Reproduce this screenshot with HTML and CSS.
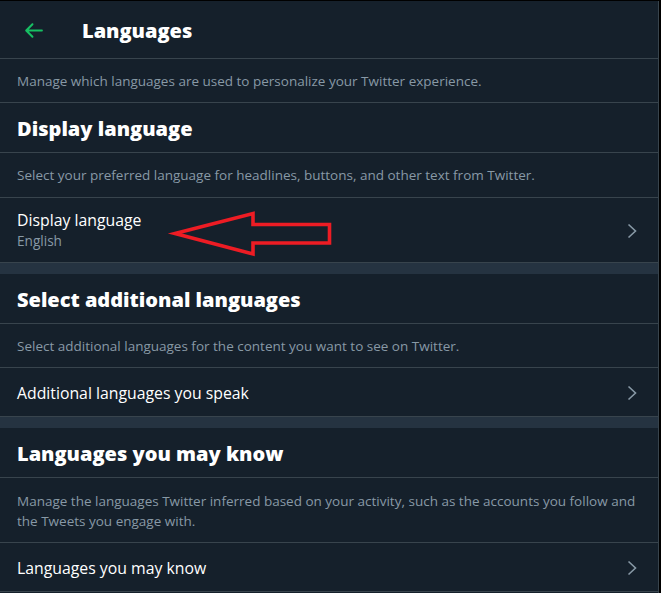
FILE: index.html
```html
<!DOCTYPE html>
<html lang="en">
<head>
<meta charset="utf-8">
<title>Languages</title>
<link rel="stylesheet" href="styles.css">
</head>
<body>
<main class="column">
  <header class="topbar">
    <span class="back">
      <svg viewBox="0 0 24 24" width="25" height="25"><path fill="#17bf63" d="M20 11H7.414l4.293-4.293c.39-.39.39-1.023 0-1.414s-1.023-.39-1.414 0l-6 6c-.39.39-.39 1.023 0 1.414l6 6c.195.195.45.293.707.293s.512-.098.707-.293c.39-.39.39-1.023 0-1.414L7.414 13H20c.553 0 1-.447 1-1s-.447-1-1-1z"/></svg>
    </span>
    <h1 class="title">Languages</h1>
  </header>

  <p class="desc desc-top">Manage which languages are used to personalize your Twitter experience.</p>

  <h2 class="heading">Display language</h2>
  <p class="desc">Select your preferred language for headlines, buttons, and other text from Twitter.</p>
  <a class="row row-tall">
    <span class="row-text">
      <span class="row-label">Display language</span>
      <span class="row-sub">English</span>
    </span>
    <svg class="chev" viewBox="0 0 10 16" width="10" height="16"><polyline points="1.5,1.5 8.5,8 1.5,14.5" fill="none" stroke="#8899a6" stroke-width="1.6"/></svg>
  </a>
  <div class="band"></div>

  <h2 class="heading">Select additional languages</h2>
  <p class="desc desc-top">Select additional languages for the content you want to see on Twitter.</p>
  <a class="row">
    <span class="row-label">Additional languages you speak</span>
    <svg class="chev" viewBox="0 0 10 16" width="10" height="16"><polyline points="1.5,1.5 8.5,8 1.5,14.5" fill="none" stroke="#8899a6" stroke-width="1.6"/></svg>
  </a>
  <div class="band"></div>

  <h2 class="heading">Languages you may know</h2>
  <p class="desc desc-two">Manage the languages Twitter inferred based on your activity, such as the accounts you follow and the Tweets you engage with.</p>
  <a class="row">
    <span class="row-label">Languages you may know</span>
    <svg class="chev" viewBox="0 0 10 16" width="10" height="16"><polyline points="1.5,1.5 8.5,8 1.5,14.5" fill="none" stroke="#8899a6" stroke-width="1.6"/></svg>
  </a>

  <svg class="annot" width="661" height="593" viewBox="0 0 661 593">
    <polygon points="175,233.5 253,213.5 253,224.5 329.5,224.5 329.5,243 253,243 253,254" fill="none" stroke="#ed1c24" stroke-width="3.6" stroke-linejoin="miter"/>
  </svg>
</main>
</body>
</html>
```

FILE: styles.css
```css
html, body {
  margin: 0;
  padding: 0;
  background: #000;
}
body {
  font-family: "Open Sans", "Noto Sans", sans-serif;
  color: #fff;
  overflow: hidden;
  height: 593px;
}
.column {
  margin-top: 1px;
  width: 658px;
  height: 592px;
  background: #15202b;
  border-right: 1px solid #38444d;
  display: flex;
  flex-direction: column;
  overflow: hidden;
}
.topbar {
  display: flex;
  align-items: center;
  height: 55px;
  padding-top: 2px;
  border-bottom: 1px solid #38444d;
  padding-left: 21px;
  flex-shrink: 0;
}
.back {
  display: flex;
  width: 61px;
}
.title {
  margin: 0;
  font-size: 20px;
  font-weight: 800;
}
.desc {
  margin: 0;
  padding: 0 17px;
  display: flex;
  align-items: center;
  height: 44px;
  flex-shrink: 0;
  border-bottom: 1px solid #38444d;
  font-size: 13.5px;
  color: #8899a6;
  line-height: 20px;
}
.desc-top {
  height: 43px;
}
.desc-two {
  height: 63px;
  padding-top: 1px;
}
.heading {
  margin: 0;
  padding: 2px 17px 0;
  height: 47px;
  flex-shrink: 0;
  display: flex;
  align-items: center;
  border-bottom: 1px solid #38444d;
  font-size: 20px;
  font-weight: 800;
}
.row {
  display: flex;
  align-items: center;
  justify-content: space-between;
  padding: 2px 21px 0 17px;
  height: 46px;
  flex-shrink: 0;
  border-bottom: 1px solid #38444d;
  color: #fff;
}
.row-tall {
  height: 62px;
}
.row-text {
  display: flex;
  flex-direction: column;
  padding-bottom: 2px;
}
.row-label {
  font-size: 15.8px;
  line-height: 22px;
}
.row-sub {
  font-size: 13.6px;
  line-height: 20px;
  color: #8899a6;
}
.chev {
  display: block;
}
.band {
  height: 11px;
  flex-shrink: 0;
  background: #253341;
}
.annot {
  position: absolute;
  left: 0;
  top: 0;
  pointer-events: none;
}
```
